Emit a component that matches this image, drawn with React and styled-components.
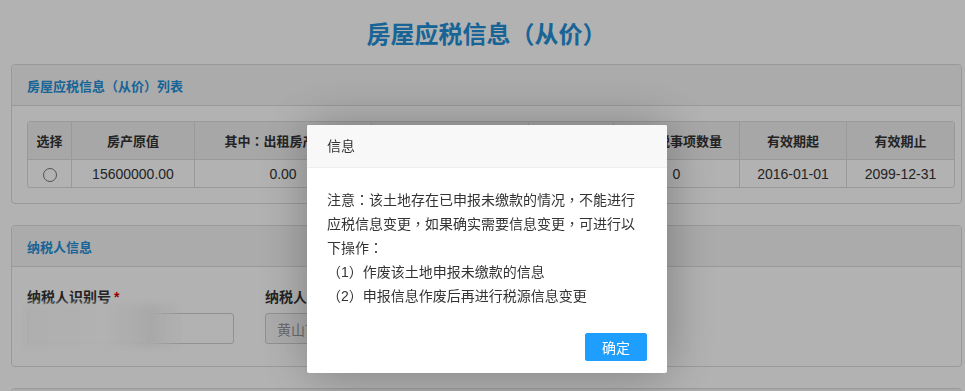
import React from 'react';
import styled, { createGlobalStyle } from 'styled-components';

const GlobalStyle = createGlobalStyle`
  html, body {
    margin: 0;
    padding: 0;
    background: #ffffff;
    font-family: 'Liberation Sans', 'Noto Sans CJK TC', 'Noto Sans CJK SC', sans-serif;
    color: #333;
    overflow: hidden;
  }
`;

const Page = styled.div`
  width: 965px;
  height: 391px;
  overflow: hidden;
  padding: 0 3px 0 11px;
  box-sizing: border-box;
`;

const PageTitle = styled.h1`
  margin: 0;
  padding-top: 18px;
  height: 64px;
  box-sizing: border-box;
  text-align: center;
  font-size: 24px;
  line-height: 34px;
  font-weight: bold;
  color: #2490d8;
`;

const Panel = styled.div`
  border: 1px solid #dcdcdc;
  border-radius: 4px;
  background: #fff;
  margin-bottom: 21px;
`;

const PanelHeader = styled.div`
  height: 40px;
  display: flex;
  align-items: center;
  padding: 0 15px;
  background: #f5f5f5;
  border-bottom: 1px solid #dcdcdc;
  border-radius: 4px 4px 0 0;
  font-size: 13px;
  font-weight: bold;
  color: #2490d8;
`;

const PanelBody = styled.div`
  padding: ${(p) => p.$pad || '15px'};
`;

const Table = styled.table`
  width: 100%;
  border-collapse: separate;
  border-spacing: 0;
  table-layout: fixed;
  border: 1px solid #dcdcdc;
  border-radius: 3px;
  font-size: 13px;
`;

const Th = styled.th`
  width: ${(p) => p.$w}px;
  height: 37px;
  background: #f0f0f0;
  font-weight: bold;
  color: #333;
  border-right: ${(p) => (p.$last ? 'none' : '1px solid #dcdcdc')};
  border-bottom: 1px solid #dcdcdc;
  white-space: nowrap;
  overflow: hidden;
  padding: 0;
`;

const Td = styled.td`
  height: 27px;
  text-align: center;
  font-size: 14px;
  color: #333;
  border-right: ${(p) => (p.$last ? 'none' : '1px solid #dcdcdc')};
  padding: 0;
`;

const Radio = styled.span`
  display: inline-block;
  width: 12px;
  height: 12px;
  border: 1px solid #777;
  border-radius: 50%;
  background: #fff;
  vertical-align: middle;
`;

const FormRow = styled.div`
  display: flex;
  gap: 31px;
`;

const Field = styled.div`
  width: 207px;
  display: flex;
  flex-direction: column;
  gap: 6px;
`;

const Label = styled.label`
  font-size: 14px;
  font-weight: bold;
  line-height: 20px;
  color: #333;
`;

const Required = styled.span`
  color: #d00;
  margin-left: 3px;
`;

const Input = styled.div`
  position: relative;
  height: 31px;
  box-sizing: border-box;
  border: 1px solid #d0d0d0;
  border-radius: 3px;
  background: ${(p) => (p.$disabled ? '#f7f7f7' : '#fff')};
  padding: 0 11px;
  display: flex;
  align-items: center;
  font-size: 14px;
  color: #999;
  white-space: nowrap;
  overflow: ${(p) => (p.$disabled ? 'hidden' : 'visible')};
`;

// redacted value: a whitish smear over the left of the field
const Smudge = styled.div`
  position: absolute;
  left: -4px;
  top: -10px;
  width: 160px;
  height: 44px;
  background: linear-gradient(90deg, #fafafa 0%, #ffffff 50%, #f2f2f2 80%, rgba(255, 255, 255, 0) 100%);
  filter: blur(3px);
`;

// the modal dims the page through a huge spread shadow
const Dialog = styled.div`
  position: fixed;
  z-index: 11;
  left: 307px;
  top: 125px;
  width: 360px;
  background: #fff;
  border-radius: 2px;
  box-shadow: 1px 1px 50px rgba(0, 0, 0, 0.3), 0 0 0 2000px rgba(0, 0, 0, 0.3);
`;

const DialogTitle = styled.div`
  height: 42px;
  line-height: 42px;
  padding: 0 20px;
  background: #f8f8f8;
  border-bottom: 1px solid #eee;
  border-radius: 2px 2px 0 0;
  font-size: 14px;
  color: #333;
`;

const DialogContent = styled.div`
  padding: 20px;
  font-size: 14px;
  line-height: 24px;
  color: #333;
`;

const DialogButtons = styled.div`
  display: flex;
  justify-content: flex-end;
  padding: 0 15px 12px;
`;

const OkButton = styled.button`
  margin: 5px 5px 0;
  height: 28px;
  padding: 0 16px;
  border: 1px solid #1e9fff;
  background: #1e9fff;
  color: #fff;
  border-radius: 2px;
  font-size: 14px;
  font-family: inherit;
  cursor: pointer;
`;

const columns = [
  { label: '选择', w: 43 },
  { label: '房产原值', w: 122 },
  { label: '其中：出租房产原值', w: 176 },
  { label: '计税依据', w: 156 },
  { label: '税率', w: 84 },
  { label: '减免税事项数量', w: 125 },
  { label: '有效期起', w: 106 },
  { label: '有效期止', w: 107 },
];

const row = ['', '15600000.00', '0.00', '10920000.00', '1.2%', '0', '2016-01-01', '2099-12-31'];

export default function App() {
  return (
    <>
      <GlobalStyle />
      <Page>
        <PageTitle>房屋应税信息（从价）</PageTitle>

        <Panel>
          <PanelHeader>房屋应税信息（从价）列表</PanelHeader>
          <PanelBody>
            <Table>
              <thead>
                <tr>
                  {columns.map((c, i) => (
                    <Th key={c.label} $w={c.w} $last={i === columns.length - 1}>
                      {c.label}
                    </Th>
                  ))}
                </tr>
              </thead>
              <tbody>
                <tr>
                  {row.map((v, i) => (
                    <Td key={i} $last={i === row.length - 1}>
                      {i === 0 ? <Radio /> : v}
                    </Td>
                  ))}
                </tr>
              </tbody>
            </Table>
          </PanelBody>
        </Panel>

        <Panel>
          <PanelHeader>纳税人信息</PanelHeader>
          <PanelBody $pad="20px 15px 22px">
            <FormRow>
              <Field>
                <Label>
                  纳税人识别号<Required>*</Required>
                </Label>
                <Input>
                  <Smudge />
                </Input>
              </Field>
              <Field>
                <Label>纳税人名称</Label>
                <Input $disabled>黄山市房地产开发有限公司</Input>
              </Field>
            </FormRow>
          </PanelBody>
        </Panel>

        <Panel>
          <PanelHeader>房屋坐落信息</PanelHeader>
        </Panel>
      </Page>

      <Dialog>
        <DialogTitle>信息</DialogTitle>
        <DialogContent>
          注意：该土地存在已申报未缴款的情况，不能进行应税信息变更，如果确实需要信息变更，可进行以下操作：
          <br />
          （1）作废该土地申报未缴款的信息
          <br />
          （2）申报信息作废后再进行税源信息变更
        </DialogContent>
        <DialogButtons>
          <OkButton>确定</OkButton>
        </DialogButtons>
      </Dialog>
    </>
  );
}
